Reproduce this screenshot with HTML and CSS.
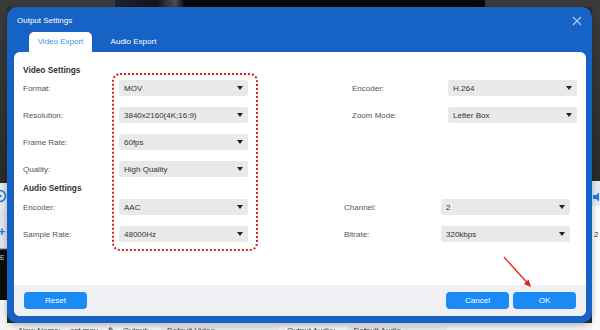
FILE: index.html
```html
<!DOCTYPE html>
<html>
<head>
<meta charset="utf-8">
<link rel="stylesheet" href="styles.css">
</head>
<body>
<div class="backdrop">
  <div class="strip strip-left">
    <svg class="bd-icon play" width="14" height="14" viewBox="0 0 14 14"><circle cx="7" cy="7" r="5.5" fill="none" stroke="#1e7be8" stroke-width="1.6"/><path d="M5.6 4.5 L9.4 7 L5.6 9.5 Z" fill="#1e7be8"/></svg>
    <span class="bd-icon plus">+</span>
    <span class="bd-icon ee">E</span>
  </div>
  <div class="center">
    <div class="topbar"></div>
    <div class="mid"></div>
    <div class="bottombar">
      <span class="bt">New Name: ...ost.mov</span>
      <span class="bt dark">✎</span>
      <span class="bt">Output:</span>
      <span class="bt box">Default Video</span>
      <span class="bt">Output Audio:</span>
      <span class="bt box box2">Default Audio</span>
    </div>
  </div>
  <div class="strip strip-right">
    <svg class="bd-icon spk" width="12" height="12" viewBox="0 0 12 12"><path d="M1 4 H4 L7 1.5 V10.5 L4 8 H1 Z" fill="#1e7be8"/></svg>
    <span class="bd-icon two">2</span>
  </div>
</div>

<div class="dialog">
  <div class="titlebar">
    <span class="title">Output Settings</span>
    <svg class="close" width="10" height="10" viewBox="0 0 10 10"><path d="M1 1 L9 9 M9 1 L1 9" stroke="#b3cbee" stroke-width="1.1"/></svg>
  </div>
  <div class="tabs">
    <div class="tab active">Video Export</div>
    <div class="tab">Audio Export</div>
  </div>
  <div class="panel">
    <div class="content">
      <div class="heading">Video Settings</div>
      <div class="grid video-grid">
        <div class="label">Format:</div>
        <div class="select"><span>MOV</span><i class="caret"></i></div>
        <div></div>
        <div class="label">Encoder:</div>
        <div class="select"><span>H.264</span><i class="caret"></i></div>

        <div class="label">Resolution:</div>
        <div class="select"><span>3840x2160(4K;16:9)</span><i class="caret"></i></div>
        <div></div>
        <div class="label">Zoom Mode:</div>
        <div class="select"><span>Letter Box</span><i class="caret"></i></div>

        <div class="label">Frame Rate:</div>
        <div class="select"><span>60fps</span><i class="caret"></i></div>
        <div></div><div></div><div></div>

        <div class="label">Quality:</div>
        <div class="select"><span>High Quality</span><i class="caret"></i></div>
        <div></div><div></div><div></div>
      </div>
      <div class="heading audio-heading">Audio Settings</div>
      <div class="grid audio-grid">
        <div class="label">Encoder:</div>
        <div class="select"><span>AAC</span><i class="caret"></i></div>
        <div></div>
        <div class="label">Channel:</div>
        <div class="select"><span>2</span><i class="caret"></i></div>

        <div class="label">Sample Rate:</div>
        <div class="select"><span>48000Hz</span><i class="caret"></i></div>
        <div></div>
        <div class="label">Bitrate:</div>
        <div class="select"><span>320kbps</span><i class="caret"></i></div>
      </div>
    </div>
    <div class="footer">
      <button class="btn">Reset</button>
      <div class="btn-group">
        <button class="btn">Cancel</button>
        <button class="btn">OK</button>
      </div>
    </div>
    <div class="highlight"></div>
    <svg class="pointer" width="36" height="40" viewBox="0 0 36 40">
      <path d="M4 4 L27 29.5" stroke="#e81e1e" stroke-width="1.3" fill="none"/>
      <path d="M31 34 L28.6 26.6 L23.9 30.9 Z" fill="#e81e1e"/>
    </svg>
  </div>
</div>
</body>
</html>
```

FILE: styles.css
```css
* { box-sizing: border-box; }
html, body { margin: 0; padding: 0; }
body {
  width: 600px;
  height: 330px;
  overflow: hidden;
  position: relative;
  font-family: "Liberation Sans", Arial, sans-serif;
  font-size: 8px;
  color: #444;
  background: #f4f5f7;
}

/* backdrop (app behind the modal) */
.backdrop {
  display: flex;
  height: 330px;
}
.strip {
  position: relative;
  overflow: hidden;
}
.strip-left {
  width: 7px;
  background: linear-gradient(to bottom,
    #3b3b3b 0, #333 100px, #2a2a2a 183px,
    #e3e8ef 183px, #e3e8ef 210px,
    #dfe4ea 210px, #dfe4ea 248px,
    #0d0d0d 250px, #0d0d0d 300px,
    #f3f4f6 300px);
}
.strip-right {
  width: 8px;
  background: linear-gradient(to bottom,
    #3b3b3b 0, #333 100px, #2a2a2a 181px,
    #e5eaf1 181px, #e5eaf1 206px,
    #fbfbfb 206px);
}
.center {
  flex: 1;
  display: flex;
  flex-direction: column;
}
.topbar {
  height: 7px;
  background: linear-gradient(to right,
    #3a3a3a 0, #3a3a3a 108px,
    #1c2230 108px, #10141c 150px, #4a4f58 168px, #0a0a0a 178px,
    #080808 478px,
    #3a3a3a 478px);
}
.mid {
  flex: 1;
  background: #2d2d2d;
}
.bottombar {
  height: 7px;
  background: #f3f4f6;
  display: flex;
  gap: 8px;
  padding: 3px 0 0 12px;
  overflow: hidden;
  white-space: nowrap;
  line-height: 10px;
  color: #444;
}
.bt.dark { color: #111; margin-left: 2px; }
.bt.box {
  background: #e6e7ea;
  width: 118px;
  padding-left: 6px;
  margin-left: 4px;
}
.bt.box2 { width: 100px; }
.bd-icon { position: absolute; }
.play { left: -7px; top: 189px; }
.plus { left: -2px; top: 225px; color: #1e7be8; font-size: 13px; font-weight: bold; line-height: 13px; }
.ee { left: 0; top: 254px; color: #ccc; font-size: 7px; line-height: 8px; }
.spk { left: 0; top: 191px; }
.two { left: 2px; top: 230px; color: #333; font-size: 8px; line-height: 10px; }

/* dialog */
.dialog {
  position: absolute;
  left: 7px;
  top: 7px;
  width: 585px;
  height: 316px;
  background: #1762c5;
  border-radius: 10px;
  box-shadow: 0 2px 6px rgba(0,0,0,0.28);
  display: flex;
  flex-direction: column;
}
.titlebar {
  height: 25px;
  display: flex;
  align-items: center;
  justify-content: space-between;
  padding: 1px 10px 0 10px;
}
.title { color: #fff; font-size: 8px; }
.close { display: block; margin-top: 1px; }
.tabs {
  height: 20px;
  display: flex;
  gap: 10px;
  padding-left: 22px;
}
.tab {
  width: 63px;
  text-align: center;
  line-height: 20px;
  color: #fff;
  border-radius: 5px 5px 0 0;
}
.tab.active {
  background: #fff;
  color: #3d8ff0;
}
.panel {
  position: relative;
  margin: 0 6px 7px 7px;
  height: 264px;
  background: #fff;
  border-radius: 6px;
  overflow: hidden;
  display: flex;
  flex-direction: column;
}
.content {
  flex: 1;
  padding: 13px 9px 0 9px;
}
.heading {
  font-weight: bold;
  font-size: 8.3px;
  color: #333;
  line-height: 10px;
  margin-bottom: 5px;
}
.audio-heading {
  margin-top: 6px;
  margin-bottom: 6px;
}
.grid {
  display: grid;
  grid-auto-rows: 16px;
  row-gap: 11px;
  align-items: center;
}
.video-grid { grid-template-columns: 96px 129px 104px 96px 129px; }
.audio-grid { grid-template-columns: 96px 129px 96px 97px 129px; }
.label { color: #555; }
.select {
  height: 16px;
  background: #e9e9ea;
  border-radius: 2px;
  display: flex;
  align-items: center;
  justify-content: space-between;
  padding: 0 5px 0 5px;
  color: #333;
}
.caret {
  width: 0;
  height: 0;
  border-left: 3px solid transparent;
  border-right: 3px solid transparent;
  border-top: 4px solid #222;
}
.footer {
  height: 31px;
  background: #eef0f4;
  display: flex;
  justify-content: space-between;
  padding: 7px 10px 0 10px;
}
.btn-group { display: flex; gap: 4px; }
.btn {
  width: 63px;
  height: 17px;
  border: none;
  border-radius: 4px;
  background: #1b8af5;
  color: #fff;
  font-family: "Liberation Sans", Arial, sans-serif;
  font-size: 8px;
  padding: 0;
}
.highlight {
  position: absolute;
  left: 98px;
  top: 21px;
  width: 146px;
  height: 178px;
  border: 2px dotted #e21d1d;
  border-radius: 8px;
}
.pointer {
  position: absolute;
  left: 486px;
  top: 201px;
}
```
